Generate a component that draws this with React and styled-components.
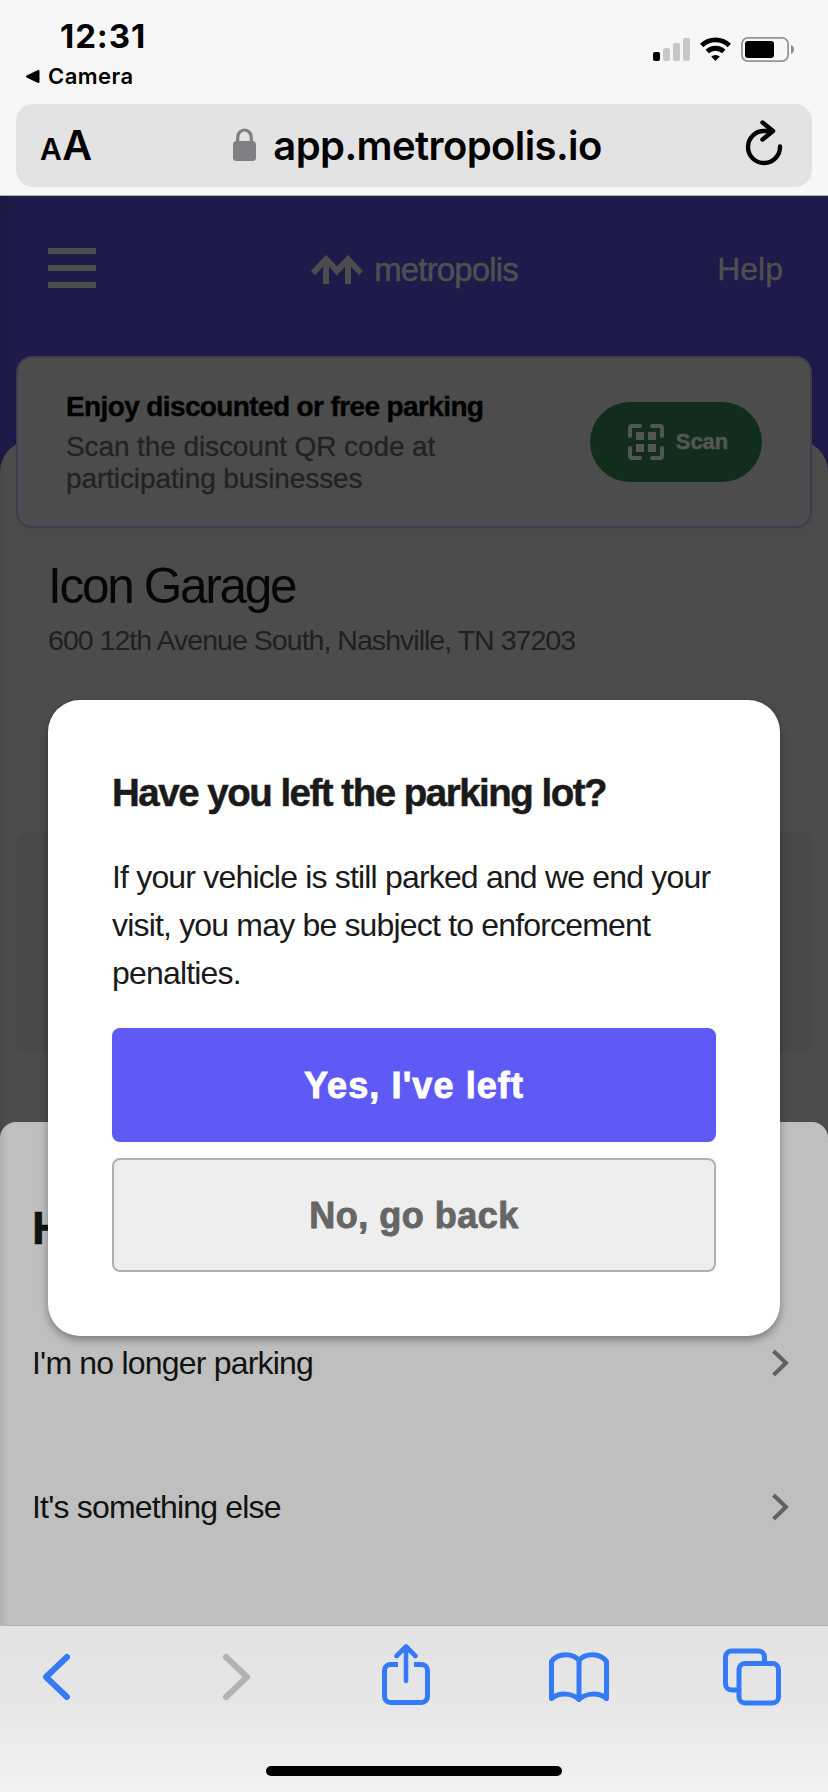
import React from 'react';
import styled, { createGlobalStyle } from 'styled-components';

const GlobalStyle = createGlobalStyle`
  * { box-sizing: border-box; }
  body {
    margin: 0;
    background: #f7f7f7;
    font-family: "Liberation Sans", Arial, sans-serif;
  }
  h1, h2, p { margin: 0; }
  button { font-family: inherit; padding: 0; border: 0; background: none; }
  svg { display: block; flex: none; }
`;

const Screen = styled.div`
  display: flex;
  flex-direction: column;
  width: 828px;
  height: 1792px;
  overflow: hidden;
`;

const BrowserTop = styled.header`
  height: 196px;
  padding: 17px 16px 0;
  border-bottom: 1px solid #b0b0b0;
  background: #f7f7f7;
  color: #000;
  font-family: Inter, "Liberation Sans", sans-serif;
`;
const StatusBar = styled.div`
  display: flex;
  justify-content: space-between;
  height: 87px;
  padding: 0 18px 0 9px;
`;
const Clock = styled.div`
  padding-left: 35px;
  font-size: 33px;
  font-weight: 700;
  line-height: 38px;
  letter-spacing: 0.9px;
`;
const BackTo = styled.div`
  display: flex;
  align-items: center;
  gap: 8px;
  margin-top: 7px;
  font-size: 22px;
  font-weight: 600;
  line-height: 28px;
  letter-spacing: 0.45px;
`;
const StatusIcons = styled.div`
  display: flex;
  gap: 10px;
  padding-top: 20px;
`;
const AddressBar = styled.div`
  display: flex;
  align-items: center;
  justify-content: space-between;
  height: 83px;
  padding: 0 29px 0 24px;
  border-radius: 17px;
  background: #e3e3e3;
  svg:last-child { margin-bottom: 5px; }
`;
const TextSize = styled.div`
  width: 53px;
  padding-top: 3px;
  font-size: 41px;
  font-weight: 600;
  line-height: 50px;
  white-space: nowrap;
  letter-spacing: -0.5px;
  small { font-size: 30px; margin-right: 1px; }
`;
const Url = styled.div`
  display: flex;
  align-items: center;
  gap: 16px;
  margin-right: 3px;
  font-size: 40px;
  font-weight: 600;
  line-height: 50px;
  letter-spacing: -0.6px;
`;

const Site = styled.main`
  position: relative;
  height: 1429px;
  overflow: hidden;
  background: #1e1a49;
`;
const Nav = styled.nav`
  display: flex;
  align-items: center;
  justify-content: space-between;
  height: 160px;
  padding: 0 45px 17px 48px;
  color: #504f50;
`;
const Menu = styled.button`
  display: flex;
  flex-direction: column;
  gap: 11px;
  width: 48px;
  span { height: 6px; background: #4c4c4c; }
`;
const Brand = styled.div`
  display: flex;
  align-items: center;
  gap: 11px;
  padding: 4px 0 0 16px;
  font-size: 33px;
  line-height: 38px;
  letter-spacing: -0.85px;
  -webkit-text-stroke: 0.5px;
`;
const Help = styled.a`
  padding-top: 3px;
  font-size: 32px;
  line-height: 36px;
  -webkit-text-stroke: 0.4px;
`;

const Banner = styled.section`
  position: relative;
  display: flex;
  align-items: center;
  justify-content: space-between;
  height: 172px;
  margin: 0 16px;
  padding: 0 48px;
  border: 2px solid #3f3c50;
  border-radius: 16px;
  background: #4c4c4c;
  box-shadow: 0 4px 12px rgba(0, 0, 0, 0.05);
`;
const BannerTitle = styled.h2`
  margin-bottom: 6px;
  color: #000;
  font-size: 28px;
  line-height: 36px;
  letter-spacing: -0.62px;
  -webkit-text-stroke: 0.4px;
`;
const BannerText = styled.p`
  color: #222;
  font-size: 28px;
  line-height: 32px;
  letter-spacing: -0.1px;
  -webkit-text-stroke: 0.3px;
`;
const ScanButton = styled.button`
  display: flex;
  align-items: center;
  justify-content: center;
  gap: 12px;
  width: 172px;
  height: 80px;
  padding-left: 4px;
  border-radius: 40px;
  background: #132d1d;
  color: #555;
  font-size: 22px;
  font-weight: 700;
  -webkit-text-stroke: 0.5px;
`;

const Lot = styled.section`
  height: 1200px;
  margin-top: -88px;
  padding: 116px 16px 0;
  border-radius: 32px 32px 0 0;
  background: #4c4c4c;
`;
const LotName = styled.h1`
  padding-left: 32px;
  color: #060606;
  font-size: 49.5px;
  font-weight: 400;
  line-height: 60px;
  letter-spacing: -2.3px;
`;
const LotAddress = styled.p`
  padding: 7px 0 0 32px;
  color: #202020;
  font-size: 28.5px;
  line-height: 34px;
  letter-spacing: -0.97px;
`;
const LotPanel = styled.div`
  height: 220px;
  margin-top: 175px;
  border-radius: 10px;
  background: #484848;
`;

const Sheet = styled.section`
  position: absolute;
  inset: 926px 0 0;
  padding: 79px 32px 0;
  border-radius: 16px 16px 0 0;
  background: #bfbfbf;
  color: #121212;
`;
const SheetTitle = styled.h2`
  margin-bottom: 36px;
  font-size: 46px;
  line-height: 54px;
  -webkit-text-stroke: 0.6px;
`;
const SheetRow = styled.div`
  display: flex;
  align-items: center;
  justify-content: space-between;
  height: 144px;
  padding-right: 7px;
  font-size: 32px;
  letter-spacing: -0.8px;
`;

const Overlay = styled.div`
  position: absolute;
  inset: 0;
  padding: 504px 48px 0;
  background: linear-gradient(90deg, rgba(0, 0, 0, 0.07), transparent 8px);
`;
const Modal = styled.div`
  display: flex;
  flex-direction: column;
  height: 636px;
  padding: 68px 64px 0;
  border-radius: 32px;
  background: #fff;
  box-shadow: 0 4px 8px rgba(0, 0, 0, 0.35);
  color: #1a1a1a;
`;
const ModalTitle = styled.h2`
  font-size: 38.5px;
  line-height: 50px;
  letter-spacing: -1.5px;
  -webkit-text-stroke: 0.5px;
`;
const ModalText = styled.p`
  margin: 35px 0 31px;
  font-size: 32px;
  line-height: 48px;
  letter-spacing: -0.82px;
  white-space: nowrap;
`;
const ModalButton = styled.button`
  height: 114px;
  margin-bottom: 16px;
  padding-top: 2px;
  border: 2px solid ${({ $primary }) => ($primary ? '#5f5af5' : '#b0b0b0')};
  border-radius: 8px;
  background: ${({ $primary }) => ($primary ? '#5f5af5' : '#eee')};
  color: ${({ $primary }) => ($primary ? '#fff' : '#666')};
  font-size: 36px;
  font-weight: 700;
  letter-spacing: ${({ $primary }) => ($primary ? '1.1px' : '0.5px')};
  -webkit-text-stroke: 0.9px;
`;

const BrowserBottom = styled.footer`
  display: flex;
  flex-direction: column;
  align-items: center;
  justify-content: space-between;
  height: 167px;
  padding: 16px 0;
  border-top: 1px solid #b4b4b4;
  background: linear-gradient(#e3e3e3, #e6e6e6 45%, #f2f2f2);
`;
const Tools = styled.div`
  display: grid;
  grid-template-columns: 180px 159px 167px 174px 58px;
  align-items: center;
  height: 70px;
  margin-right: 4px;
  color: #347af6;
`;
const HomeBar = styled.div`
  width: 296px;
  height: 10px;
  border-radius: 5px;
  background: #000;
`;

const SignalIcon = () => (
  <svg width="37" height="25" viewBox="0 0 37 25">
    <rect y="15" width="7" height="9" rx="2" />
    <g fill="#c7c7c7">
      <rect x="10" y="11" width="7" height="13" rx="2" />
      <rect x="20" y="6" width="7" height="18" rx="2" />
      <rect x="30" y="1" width="7" height="23" rx="2" />
    </g>
  </svg>
);

const WifiIcon = () => (
  <svg width="31" height="25" viewBox="0 0 31 25">
    <g fill="none" stroke="#000" strokeWidth="4.8">
      <path d="M1.7 8.4a20 20 0 0 1 27.600 0" />
      <path d="M7.2 14.600a12 12 0 0 1 16.600 0" />
    </g>
    <path d="M15.500 24l-4.300-4.400a6.300 6.300 0 0 1 8.600 0z" />
  </svg>
);

const BatteryIcon = () => (
  <svg width="53" height="25" viewBox="0 0 53 25">
    <rect x="0.9" y="0.9" width="46.2" height="23.2" rx="6" fill="none" stroke="#959595" strokeWidth="1.8" />
    <rect x="4" y="4" width="29" height="17" rx="3" />
    <path d="M50 8c4 1.500 4 7.500 0 9z" fill="#8c8c8c" />
  </svg>
);

const BackTriangle = () => (
  <svg width="15" height="16" viewBox="0 0 15 16">
    <path d="M2 8.500L13.500 3v11z" stroke="#000" strokeWidth="2" strokeLinejoin="round" />
  </svg>
);

const LockIcon = () => (
  <svg width="24" height="35" viewBox="0 0 24 35">
    <rect y="13" width="23" height="20" rx="3.500" fill="#808082" />
    <path d="M4.700 14V9.500a6.800 7.500 0 0 1 13.600 0V14" fill="none" stroke="#808082" strokeWidth="3.200" />
  </svg>
);

const ReloadIcon = () => (
  <svg width="38" height="46" viewBox="0 0 38 46" fill="none" stroke="#000" strokeWidth="4.400" strokeLinecap="round" strokeLinejoin="round">
    <path d="M26 11h-7a16 16 0 1 0 16 15.500" />
    <path d="M17.500 2.500l10.500 8.500-10.500 8.500" />
  </svg>
);

const LogoMark = () => (
  <svg width="52" height="30" viewBox="0 0 52 30" fill="#4c4c4c">
    <path d="M0 16L15 0l11 11.300L37 0l15 16-4 4.300-8-8.500V29h-6V11.800l-8 8.700-8-8.700V29h-6V11.800l-8 8.500z" />
  </svg>
);

const ScanIcon = () => (
  <svg width="36" height="36" viewBox="0 0 36 36" fill="#555">
    <path
      d="M2 12V4a2 2 0 0 1 2-2h8M24 2h8a2 2 0 0 1 2 2v8M34 24v8a2 2 0 0 1-2 2h-8M12 34H4a2 2 0 0 1-2-2v-8"
      fill="none"
      stroke="#555"
      strokeWidth="4"
      strokeLinecap="round"
    />
    <path d="M8 8h8v8H8zM20 8h8v8h-8zM8 20h8v8H8zM20 20h8v8h-8z" />
  </svg>
);

const RowArrow = () => (
  <svg width="19" height="28" viewBox="0 0 19 28" fill="none" stroke="#616161" strokeWidth="4">
    <path d="M3.500 2L16 14 3.500 26" />
  </svg>
);

const NavArrow = ({ forward }) => (
  <svg width="27" height="48" viewBox="0 0 27 48" fill="none" stroke={forward ? '#b3b3b3' : 'currentColor'} strokeWidth="6" strokeLinecap="round" strokeLinejoin="round">
    <path d={forward ? 'M3 4l21 20L3 44' : 'M24 4L3 24l21 20'} />
  </svg>
);

const ShareIcon = () => (
  <svg width="48" height="70" viewBox="0 0 48 70" fill="none" stroke="currentColor" strokeWidth="5">
    <path d="M16 22.500H8.500a6 6 0 0 0-6 6v26a6 6 0 0 0 6 6h31a6 6 0 0 0 6-6v-26a6 6 0 0 0-6-6H32" />
    <path d="M24 39V5M14.500 14L24 4.500l9.500 9.500" strokeWidth="4.600" strokeLinecap="round" strokeLinejoin="round" />
  </svg>
);

const BookIcon = () => (
  <svg width="60" height="50" viewBox="0 0 60 50" fill="none" stroke="currentColor" strokeWidth="5" strokeLinecap="round" strokeLinejoin="round">
    <path d="M30 47.500V8.500C24 .8 9 .5 2.500 9.500v37c7-6 20.500-6 27.500 1 7-7 20.500-7 27.500-1v-37C51 .5 36 .8 30 8.500" />
  </svg>
);

const TabsIcon = () => (
  <svg width="58" height="58" viewBox="0 0 58 58" fill="none" stroke="currentColor" strokeWidth="5">
    <rect x="16" y="15.500" width="39.500" height="39.500" rx="6" />
    <path d="M41.500 14V9a6 6 0 0 0-6-6h-27a6 6 0 0 0-6 6v27a6 6 0 0 0 6 6H15" />
  </svg>
);

const reasons = ["I'm no longer parking", "It's something else"];

const App = () => (
  <>
    <GlobalStyle />
    <Screen>
      <BrowserTop>
        <StatusBar>
          <div>
            <Clock>12:31</Clock>
            <BackTo><BackTriangle />Camera</BackTo>
          </div>
          <StatusIcons>
            <SignalIcon />
            <WifiIcon />
            <BatteryIcon />
          </StatusIcons>
        </StatusBar>
        <AddressBar>
          <TextSize><small>A</small>A</TextSize>
          <Url>
            <LockIcon />
            <span>app.metropolis.io</span>
          </Url>
          <ReloadIcon />
        </AddressBar>
      </BrowserTop>

      <Site>
        <Nav>
          <Menu aria-label="Menu"><span /><span /><span /></Menu>
          <Brand><LogoMark />metropolis</Brand>
          <Help>Help</Help>
        </Nav>
        <Banner>
          <div>
            <BannerTitle>Enjoy discounted or free parking</BannerTitle>
            <BannerText>
              Scan the discount QR code at
              <br />
              participating businesses
            </BannerText>
          </div>
          <ScanButton><ScanIcon />Scan</ScanButton>
        </Banner>
        <Lot>
          <LotName>Icon Garage</LotName>
          <LotAddress>600 12th Avenue South, Nashville, TN 37203</LotAddress>
          <LotPanel />
        </Lot>

        <Sheet>
          <SheetTitle>H</SheetTitle>
          {reasons.map((reason) => (
            <SheetRow key={reason}>
              {reason}
              <RowArrow />
            </SheetRow>
          ))}
        </Sheet>

        <Overlay>
          <Modal>
            <ModalTitle>Have you left the parking lot?</ModalTitle>
            <ModalText>
              If your vehicle is still parked and we end your
              <br />
              visit, you may be subject to enforcement
              <br />
              penalties.
            </ModalText>
            <ModalButton $primary>Yes, I've left</ModalButton>
            <ModalButton>No, go back</ModalButton>
          </Modal>
        </Overlay>
      </Site>

      <BrowserBottom>
        <Tools>
          <NavArrow />
          <NavArrow forward />
          <ShareIcon />
          <BookIcon />
          <TabsIcon />
        </Tools>
        <HomeBar />
      </BrowserBottom>
    </Screen>
  </>
);

export default App;
